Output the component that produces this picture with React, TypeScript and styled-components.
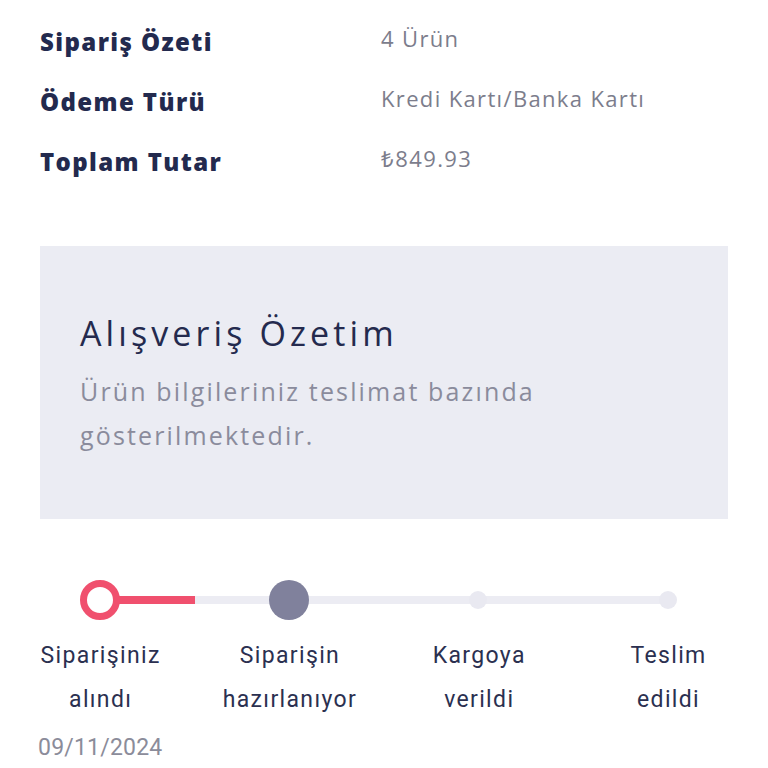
import React from "react";
import styled, { createGlobalStyle } from "styled-components";

const Global = createGlobalStyle`
  html, body { margin: 0; padding: 0; background: #ffffff; }
  body { font-family: "Open Sans", "Liberation Sans", sans-serif; }
`;

const Page = styled.div`
  width: 768px;
  height: 768px;
  overflow: hidden;
  background: #ffffff;
`;

const Summary = styled.dl`
  margin: 0;
  padding: 12px 40px 0;
  display: grid;
  grid-template-columns: 341px 1fr;
  grid-auto-rows: 60px;
`;

const Label = styled.dt`
  margin: 0;
  font-weight: 800;
  font-size: 24px;
  letter-spacing: 1.4px;
  line-height: 60px;
  color: #232a4e;
`;

const Value = styled.dd`
  margin: 0;
  font-size: 22px;
  letter-spacing: 1.35px;
  line-height: 52px;
  color: #7c7d8c;
`;

const InfoBox = styled.section`
  margin: 54px 40px 0;
  height: 273px;
  box-sizing: border-box;
  padding: 65px 40px 0;
  background: #ebecf3;
`;

const Title = styled.h2`
  margin: 0;
  font-size: 34px;
  font-weight: 500;
  letter-spacing: 4.1px;
  line-height: 44px;
  color: #242a4e;
`;

const Subtitle = styled.p`
  margin: 14px 0 0;
  font-size: 25px;
  letter-spacing: 2.15px;
  line-height: 44px;
  color: #8a8b9c;
  width: 530px;
`;

const Progress = styled.svg`
  display: block;
  margin-top: 59px;
`;

const Steps = styled.ol`
  list-style: none;
  margin: 12px 0 0;
  padding: 0 0 0 6px;
  display: grid;
  grid-template-columns: repeat(4, 189.3px);
`;

const Step = styled.li`
  text-align: center;
  font-family: Roboto, "Liberation Sans", sans-serif;
  font-size: 23px;
  letter-spacing: 1.35px;
  line-height: 44px;
  color: #2b3050;
`;

const DateText = styled.div`
  margin-top: 11px;
  padding-left: 38px;
  font-family: Roboto, "Liberation Sans", sans-serif;
  font-size: 23px;
  letter-spacing: 0.2px;
  line-height: 30px;
  color: #8b8c9a;
`;

const rows = [
  ["Sipariş Özeti", "4 Ürün"],
  ["Ödeme Türü", "Kredi Kartı/Banka Kartı"],
  ["Toplam Tutar", "₺849.93"],
];

const steps = [
  ["Siparişiniz", "alındı"],
  ["Siparişin", "hazırlanıyor"],
  ["Kargoya", "verildi"],
  ["Teslim", "edildi"],
];

export default function App() {
  return (
    <Page>
      <Global />
      <Summary>
        {rows.map(([l, v]) => (
          <React.Fragment key={l}>
            <Label>{l}</Label>
            <Value>{v}</Value>
          </React.Fragment>
        ))}
      </Summary>
      <InfoBox>
        <Title>Alışveriş Özetim</Title>
        <Subtitle>Ürün bilgileriniz teslimat bazında gösterilmektedir.</Subtitle>
      </InfoBox>
      <Progress width="768" height="44" viewBox="0 578 768 44">
        <line x1="100" y1="600" x2="668" y2="600" stroke="#ececf3" strokeWidth="8" />
        <line x1="100" y1="600" x2="195" y2="600" stroke="#f0506e" strokeWidth="8" />
        <circle cx="478" cy="600" r="9" fill="#e9e9f1" />
        <circle cx="668" cy="600" r="9" fill="#e9e9f1" />
        <circle cx="289" cy="600" r="20" fill="#80819c" />
        <circle cx="100" cy="600" r="16.5" fill="#ffffff" stroke="#f0506e" strokeWidth="7" />
      </Progress>
      <Steps>
        {steps.map(([a, b]) => (
          <Step key={a}>
            {a}
            <br />
            {b}
          </Step>
        ))}
      </Steps>
      <DateText>09/11/2024</DateText>
    </Page>
  );
}
